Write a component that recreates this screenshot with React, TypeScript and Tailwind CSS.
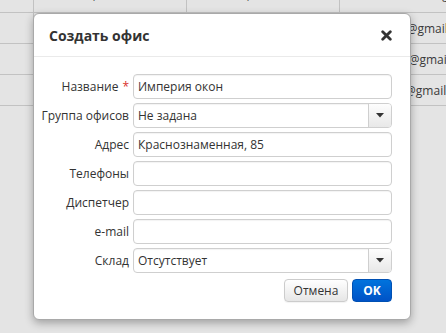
import React from "react";

const rows = [
  { a: "09-00-30, 09-22-29", b: "09-00-30, 09-22-29", c: "novikov.oknov@gmail.com" },
  { a: "09-11-42, 09-31-17", b: "09-11-42, 09-31-17", c: "oknastroy@gmail.com" },
  { a: "09-44-10, 09-44-12", b: "09-44-10, 09-44-12", c: "oknasever@gmail.com" },
  { a: "09-50-05, 09-50-06", b: "09-50-05, 09-50-06", c: "oknaprofi@gmail.com" },
];

function Caret() {
  return (
    <svg width="8" height="5" viewBox="0 0 8 5" className="block">
      <path d="M0 0 H8 L4 4.5 Z" fill="#333" />
    </svg>
  );
}

function TextField({ value }: { value?: string }) {
  return (
    <div className="h-[25px] w-[259px] rounded-[4px] border border-[#cfcfcf] bg-white px-[4px] leading-[23px] text-[12px] text-[#333] shadow-[inset_0_1px_1px_rgba(0,0,0,0.05)]">
      {value}
    </div>
  );
}

function SelectField({ value }: { value: string }) {
  return (
    <div className="flex h-[25px] w-[259px] overflow-hidden rounded-[4px] border border-[#cfcfcf] bg-white shadow-[inset_0_1px_1px_rgba(0,0,0,0.05)]">
      <div className="flex-1 px-[4px] leading-[23px] text-[12px] text-[#333]">{value}</div>
      <div className="flex w-[23px] items-center justify-center border-l border-[#cfcfcf] bg-gradient-to-b from-[#fdfdfd] to-[#e8e8e8]">
        <Caret />
      </div>
    </div>
  );
}

function Row({ label, required, children }: { label: string; required?: boolean; children: React.ReactNode }) {
  return (
    <div className="flex items-center">
      <div className="w-[96px] pr-[1px] text-right text-[12px] text-[#333]">
        {label}
        {required && <span className="ml-[4px] text-[#d9302c]">*</span>}
      </div>
      <div className="ml-[3px]">{children}</div>
    </div>
  );
}

export default function App() {
  return (
    <div
      className="relative h-[333px] w-[446px] overflow-hidden bg-[#e4e4e4]"
      style={{ fontFamily: '"Open Sans", "Noto Sans", sans-serif' }}
    >
      {/* table behind the modal */}
      <div className="-mt-[18px] text-[12px] text-[#3a3a3a]">
        {rows.map((r, i) => (
          <div
            key={i}
            className={
              "flex h-[31px] border-b border-[#c2c2c2] whitespace-nowrap " +
              (i === 0 ? "leading-[26px]" : "leading-[31px]")
            }
          >
            <div className="w-[34px] shrink-0 border-r border-[#c2c2c2]" />
            <div className="w-[153px] shrink-0 border-r border-[#c2c2c2] pl-[10px]">{r.a}</div>
            <div className="w-[153px] shrink-0 border-r border-[#c2c2c2] pl-[11px]">{r.b}</div>
            <div className="min-w-0 flex-1 pl-[11px]">{r.c}</div>
          </div>
        ))}
      </div>

      {/* modal */}
      <div className="absolute left-[33px] top-[13px] w-[378px] rounded-[6px] border border-[#a9a9a9] bg-white shadow-[0_3px_8px_rgba(0,0,0,0.3)]">
        <div className="flex h-[43px] items-center justify-between border-b border-[#eaeaea] pl-[15px] pr-[18px]">
          <h3 className="text-[14px] font-bold text-[#333]">Создать офис</h3>
          <svg width="11" height="11" viewBox="0 0 11 11" className="mt-[1px]">
            <path d="M1.7 1.7 L9.3 9.3 M9.3 1.7 L1.7 9.3" stroke="#333" strokeWidth="2.8" strokeLinecap="round" />
          </svg>
        </div>
        <div className="flex flex-col gap-[4px] pt-[17px]">
          <Row label="Название" required>
            <TextField value="Империя окон" />
          </Row>
          <Row label="Группа офисов">
            <SelectField value="Не задана" />
          </Row>
          <Row label="Адрес">
            <TextField value="Краснознаменная, 85" />
          </Row>
          <Row label="Телефоны">
            <TextField />
          </Row>
          <Row label="Диспетчер">
            <TextField />
          </Row>
          <Row label="e-mail">
            <TextField />
          </Row>
          <Row label="Склад">
            <SelectField value="Отсутствует" />
          </Row>
        </div>
        <div className="flex justify-end gap-[4px] pb-[17px] pr-[18px] pt-[6px]">
          <button className="h-[23px] w-[64px] rounded-[4px] border border-[#cccccc] bg-gradient-to-b from-white to-[#e6e6e6] text-[12px] text-[#333] shadow-[0_1px_1px_rgba(0,0,0,0.05)]">
            Отмена
          </button>
          <button className="h-[23px] w-[40px] rounded-[4px] border border-[#0050b3] bg-gradient-to-b from-[#0073dd] to-[#0052c6] text-[12px] font-bold text-white">
            OK
          </button>
        </div>
      </div>
    </div>
  );
}
